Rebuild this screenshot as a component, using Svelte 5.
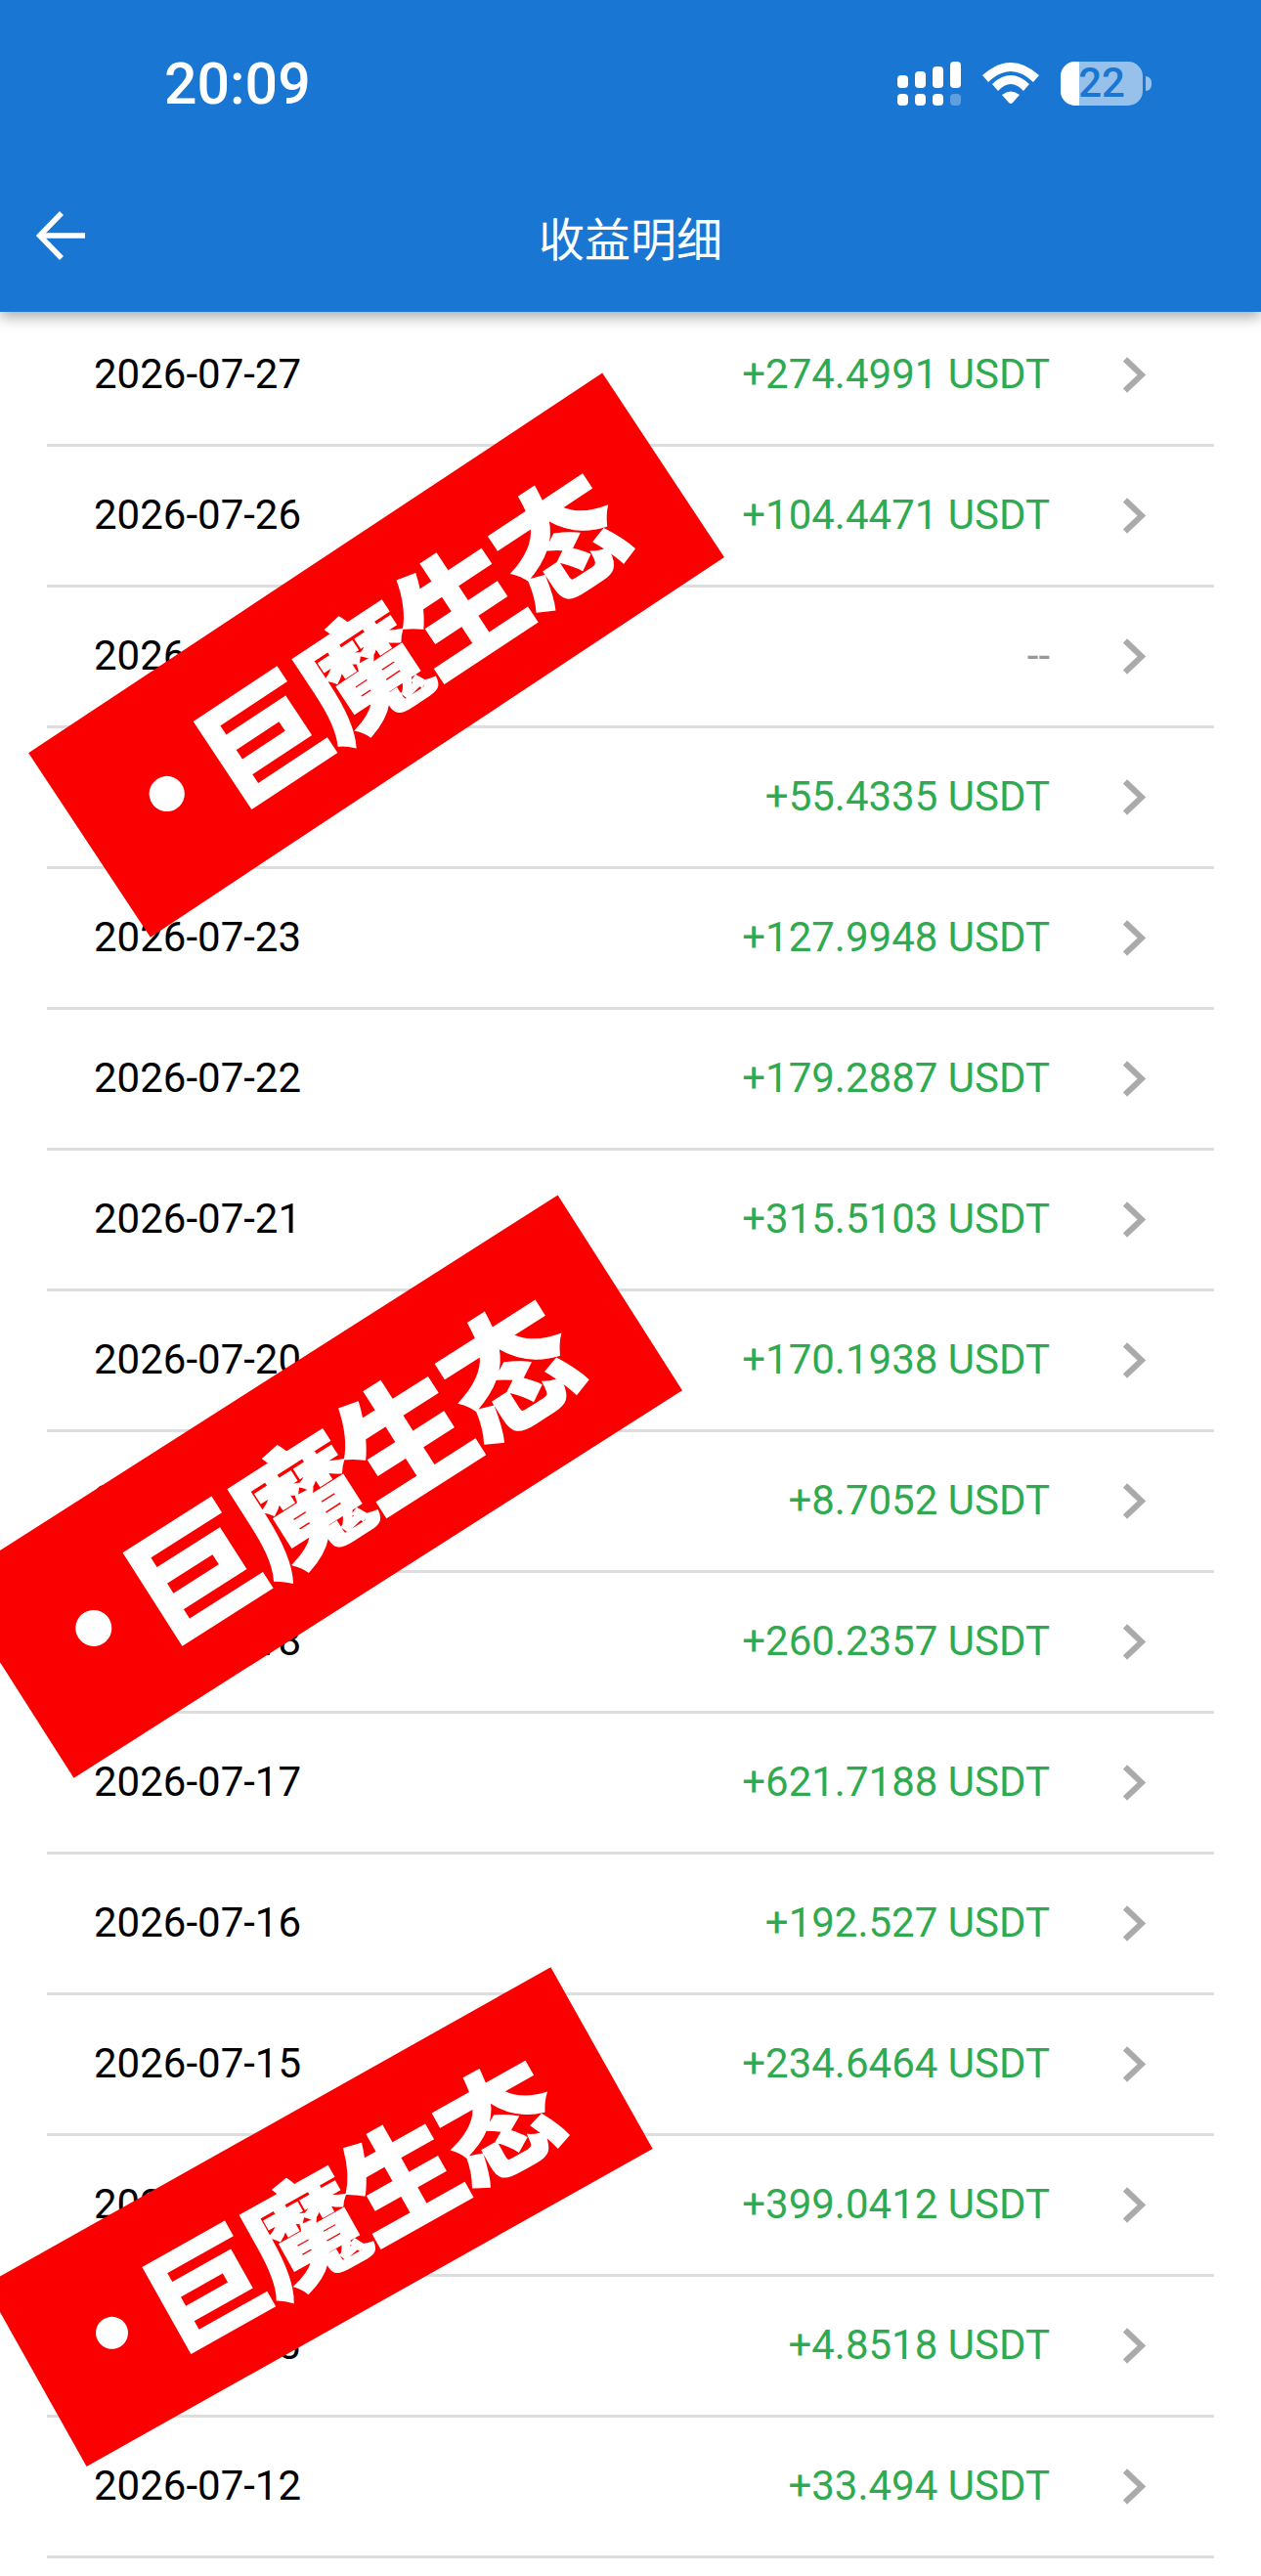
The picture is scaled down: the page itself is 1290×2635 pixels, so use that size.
<script>
  const rows = [
    { date: '2026-07-27', amount: '+274.4991 USDT' },
    { date: '2026-07-26', amount: '+104.4471 USDT' },
    { date: '2026-07-25', amount: null },
    { date: '2026-07-24', amount: '+55.4335 USDT' },
    { date: '2026-07-23', amount: '+127.9948 USDT' },
    { date: '2026-07-22', amount: '+179.2887 USDT' },
    { date: '2026-07-21', amount: '+315.5103 USDT' },
    { date: '2026-07-20', amount: '+170.1938 USDT' },
    { date: '2026-07-19', amount: '+8.7052 USDT' },
    { date: '2026-07-18', amount: '+260.2357 USDT' },
    { date: '2026-07-17', amount: '+621.7188 USDT' },
    { date: '2026-07-16', amount: '+192.527 USDT' },
    { date: '2026-07-15', amount: '+234.6464 USDT' },
    { date: '2026-07-14', amount: '+399.0412 USDT' },
    { date: '2026-07-13', amount: '+4.8518 USDT' },
    { date: '2026-07-12', amount: '+33.494 USDT' }
  ];

  // signal bars: top segment start, in svg units
  const bars = [14, 10, 5, 0];
</script>

<div class="page">
  <header>
    <div class="status">
      <span class="time">20:09</span>
      <div class="status-icons">
        <svg class="signal" width="65" height="45" viewBox="0 0 65 45">
          {#each bars as top, i}
            <rect x={i * 18} y={top} width="11" height={27 - top} rx="4" fill="#fff" />
            <rect x={i * 18} y="33" width="11" height="12" rx="4" fill="#fff" opacity={i === 3 ? 0.3 : 1} />
          {/each}
        </svg>
        <svg class="wifi" width="58" height="43" viewBox="0 0 58 43">
          <path d="M0 13Q29-13 58 13L52 20Q29-2 6 20Z" fill="#fff" />
          <path d="M10 22Q29 4 48 22L42 29Q29 15 16 29Z" fill="#fff" />
          <path d="M20 33Q29 26 38 33L31 41Q29 43 27 41Z" fill="#fff" />
        </svg>
        <div class="battery">
          <div class="cell">
            <span class="fill"></span>
            <span class="level">22</span>
          </div>
          <span class="nub"></span>
        </div>
      </div>
    </div>
    <nav>
      <svg width="50" height="50" viewBox="0 0 50 50" fill="none" stroke="#fff" stroke-width="5.5">
        <path d="M50 25H4M26 2L3.5 25L26 48" />
      </svg>
      <h1>收益明细</h1>
      <span></span>
    </nav>
  </header>

  <ul>
    {#each rows as row}
      <li>
        <span class="date">{row.date}</span>
        {#if row.amount}
          <span class="amount">{row.amount}</span>
        {:else}
          <span class="amount empty">--</span>
        {/if}
        <svg class="chevron" width="24" height="37" viewBox="0 0 24 37" fill="none" stroke="#aaa" stroke-width="6">
          <path d="M3 2.5L20 18.5L3 34.5" />
        </svg>
      </li>
    {/each}
  </ul>

  <div class="stamp stamp-a"><i></i><b>巨魔生态</b></div>
  <div class="stamp stamp-b"><i></i><b>巨魔生态</b></div>
  <div class="stamp stamp-c"><i></i><b>巨魔生态</b></div>
</div>

<style>
  :global(body) {
    background: #fff;
  }

  .page {
    position: relative;
    width: 1290px;
    height: 2635px;
    overflow: hidden;
    background: #fff;
    font-family: Roboto, "Noto Sans CJK SC", sans-serif;
  }

  header {
    position: relative;
    z-index: 1;
    height: 319px;
    background: #1976d2;
    color: #fff;
    box-shadow: 0 5px 14px rgba(0, 0, 0, 0.35);
  }

  .status {
    display: flex;
    align-items: center;
    justify-content: space-between;
    height: 170px;
    padding: 0 112px 0 168px;
  }

  .time {
    font-size: 59px;
    font-weight: 500;
  }

  .status-icons {
    display: flex;
    align-items: center;
    gap: 22px;
  }

  .battery {
    display: flex;
    align-items: center;
    gap: 3px;
  }

  .cell {
    position: relative;
    display: flex;
    align-items: center;
    justify-content: center;
    width: 84px;
    height: 45px;
    border-radius: 15px;
    background: rgba(255, 255, 255, 0.55);
  }

  .fill {
    position: absolute;
    left: 0;
    top: 0;
    bottom: 0;
    width: 19px;
    border-radius: 15px 0 0 15px;
    background: #fff;
  }

  .level {
    position: relative;
    font-size: 42px;
    font-weight: 500;
    line-height: 1;
    color: #1976d2;
  }

  .nub {
    width: 6px;
    height: 15px;
    border-radius: 0 6px 6px 0;
    background: rgba(255, 255, 255, 0.55);
  }

  nav {
    display: grid;
    grid-template-columns: 1fr auto 1fr;
    align-items: center;
    height: 149px;
    padding: 0 37px 4px;
    box-sizing: border-box;
  }

  nav svg {
    margin-bottom: 4px;
  }

  h1 {
    margin: 0;
    font-family: "Noto Sans CJK SC", sans-serif;
    font-size: 47px;
    font-weight: 400;
    line-height: 1.2;
  }

  ul {
    margin: -6px 48px 0;
    padding: 0;
    list-style: none;
  }

  li {
    display: flex;
    align-items: center;
    box-sizing: border-box;
    height: 144px;
    padding: 0 70px 0 48px;
    border-bottom: 3px solid #ddd;
    font-size: 42px;
  }

  .date {
    flex: 1;
    padding-bottom: 2px;
    color: #000;
  }

  .amount {
    padding-bottom: 2px;
    color: #30aa50;
  }

  .amount.empty {
    color: #999;
  }

  .chevron {
    margin-left: 74px;
  }

  .stamp {
    position: absolute;
    z-index: 2;
    display: flex;
    align-items: center;
    justify-content: center;
    gap: 0.28em;
    box-sizing: border-box;
    width: 5.97em;
    height: 1.915em;
    padding-left: 0.03em;
    background: #fb0000;
    color: #fff;
    font-family: "Noto Sans CJK SC", sans-serif;
  }

  .stamp i {
    width: 0.3em;
    height: 0.3em;
    border-radius: 50%;
    background: #fff;
  }

  .stamp b {
    font-size: 1.06em;
    font-weight: 900;
    line-height: 1;
    letter-spacing: -0.03em;
    -webkit-text-stroke: 1.5px #fff;
  }

  .stamp-a {
    left: 33px;
    top: 557px;
    font-size: 118px;
    transform: rotate(-33.5deg);
  }

  .stamp-b {
    left: -46px;
    top: 1402px;
    font-size: 123.7px;
    transform: rotate(-32.5deg);
  }

  .stamp-c {
    left: -6px;
    top: 2161px;
    font-size: 111.3px;
    transform: rotate(-29.3deg);
  }
</style>
